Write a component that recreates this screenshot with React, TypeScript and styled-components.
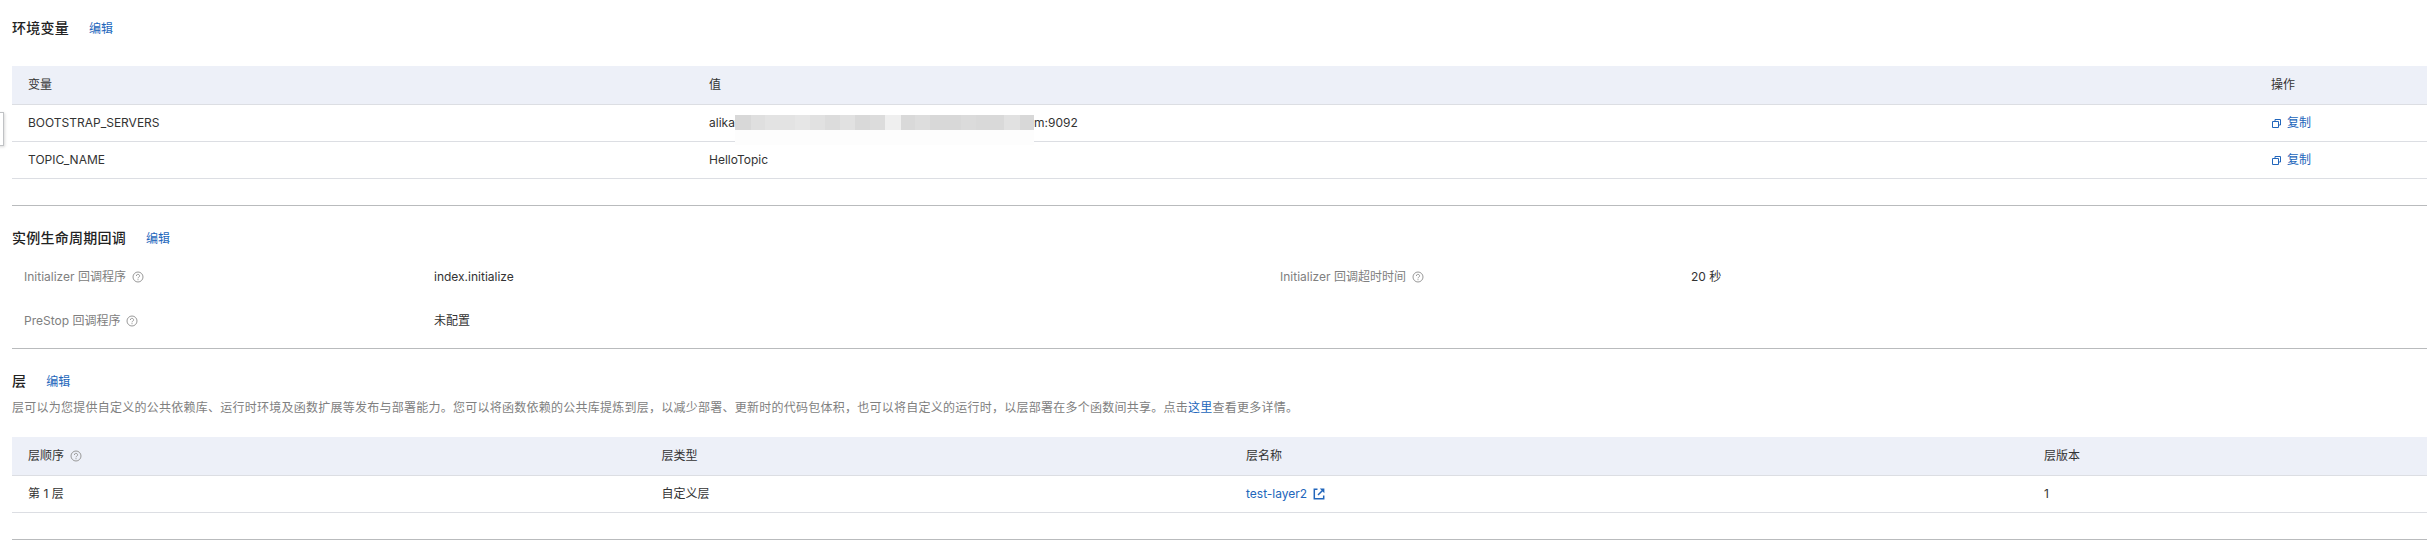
import React from "react";
import styled, { createGlobalStyle } from "styled-components";

const Global = createGlobalStyle`
  body {
    margin: 0;
    background: #fff;
    color: #333;
    font: 12px/18px Inter, "Noto Sans CJK SC", sans-serif;
    overflow: hidden;
  }
  * { box-sizing: border-box; }
`;

const Page = styled.main`
  position: relative;
  height: 550px;
  padding-left: 12px;
  overflow: hidden;
`;

const Section = styled.section<{ $height: number; $top: number }>`
  height: ${(p) => p.$height}px;
  padding-top: ${(p) => p.$top}px;
  border-bottom: 1px solid #b9bbbd;
`;

const Heading = styled.header<{ $gap: number }>`
  display: flex;
  align-items: center;
  height: 20px;
  margin-bottom: ${(p) => p.$gap}px;
`;

const Title = styled.h2`
  margin: 0 20px 0 0;
  font-size: 14px;
  line-height: 20px;
  font-weight: 500;
  letter-spacing: 0.25px;
  color: #222;
`;

const Link = styled.a`
  color: #2266bb;
  cursor: pointer;
`;

const EditLink = styled(Link)`
  padding-top: 1px;
`;

const Row = styled.div<{ $cols: string; $head?: boolean }>`
  display: grid;
  grid-template-columns: ${(p) => p.$cols};
  align-items: center;
  height: ${(p) => (p.$head ? 39 : 37)}px;
  padding-left: 16px;
  border-bottom: 1px solid #dcdee3;
  background: ${(p) => (p.$head ? "#edf0f8" : "transparent")};
`;

const Cell = styled.div`
  display: flex;
  align-items: center;
`;

const LinkCell = styled(Cell)`
  color: #2266bb;
  cursor: pointer;
`;

const Label = styled(Cell)`
  color: #808080;
`;

const InfoGrid = styled.div`
  display: grid;
  grid-template-columns: 410px 846px 411px 1fr;
  grid-auto-rows: 44px;
  padding-left: 12px;
`;

const Description = styled.p`
  margin: 0 0 20px;
  color: #808080;
  letter-spacing: 0.25px;
`;

const HelpSvg = styled.svg`
  margin-left: 6px;
  color: #999;
`;

const Help = () => (
  <HelpSvg width="12" height="12" viewBox="0 0 12 12" fill="none" stroke="currentColor">
    <circle cx="6" cy="6" r="5" />
    <path d="M4.4 5a1.6 1.5 0 1 1 2.3 1.2Q6 6.6 6 7.3M6 8.2v1" />
  </HelpSvg>
);

const CopySvg = styled.svg`
  margin-right: 5px;
`;

const Copy = () => (
  <LinkCell>
    <CopySvg width="11" height="11" viewBox="0 0 11 11" fill="none" stroke="currentColor">
      <path d="M1.5 3.5h6v6h-6zM4 3.5v-2h5.5v5.5h-2" />
    </CopySvg>
    复制
  </LinkCell>
);

const ExternalSvg = styled.svg`
  margin-left: 6px;
`;

const External = () => (
  <ExternalSvg width="12" height="12" viewBox="0 0 12 12" fill="none" stroke="currentColor" strokeWidth="1.5">
    <path d="M4.5 1.3H1.3v9.4h9.4V7.5M5 7l4.5-4.5" />
    <path d="M6.8.6h4.6v4.6z" fill="currentColor" stroke="none" />
  </ExternalSvg>
);

const Redacted = styled.span`
  position: relative;
  width: 325px;
`;

const Mosaic = styled.span`
  position: absolute;
  left: 26px;
  top: 1px;
  display: flex;
  width: 299px;
  height: 30px;
  background: #fdfdfd;
`;

const Tile = styled.i<{ $c: string; $w: number }>`
  flex: ${(p) => p.$w} 0 0;
  height: 15px;
  background: ${(p) => p.$c};
`;

const tiles: [string, number][] = [
  ["#d8d8d8", 16], ["#dfdfdf", 14], ["#e3e3e3", 30], ["#e6e6e6", 15],
  ["#e1e1e1", 15], ["#dcdcdc", 15], ["#e1e1e1", 15], ["#d9d9d9", 15],
  ["#dcdcdc", 15], ["#efefef", 16], ["#d9d9d9", 14], ["#dddddd", 15],
  ["#d8d8d8", 31], ["#dbdbdb", 15], ["#d9d9d9", 28], ["#e1e1e1", 16],
  ["#d8d8d8", 14],
];

const Handle = styled.div`
  position: absolute;
  left: -6px;
  top: 112px;
  width: 10px;
  height: 34px;
  background: #fff;
  border: 1px solid #c0c2c5;
  box-shadow: 1px 1px 3px rgba(0, 0, 0, 0.15);
`;

const envCols = "681px 1562px 1fr";
const layerCols = "633.5px 584.5px 798px 1fr";

export default function App() {
  return (
    <Page>
      <Global />
      <Handle />
      <Section $height={206} $top={18}>
        <Heading $gap={28}><Title>环境变量</Title><EditLink>编辑</EditLink></Heading>
        <Row $cols={envCols} $head><Cell>变量</Cell><Cell>值</Cell><Cell>操作</Cell></Row>
        <Row $cols={envCols}>
          <Cell>BOOTSTRAP_SERVERS</Cell>
          <Cell>
            <Redacted>
              alikaf
              <Mosaic>{tiles.map(([c, w], i) => <Tile key={i} $c={c} $w={w} />)}</Mosaic>
            </Redacted>
            m:9092
          </Cell>
          <Copy />
        </Row>
        <Row $cols={envCols}><Cell>TOPIC_NAME</Cell><Cell>HelloTopic</Cell><Copy /></Row>
      </Section>
      <Section $height={143} $top={22}>
        <Heading $gap={7}><Title>实例生命周期回调</Title><EditLink>编辑</EditLink></Heading>
        <InfoGrid>
          <Label>Initializer 回调程序<Help /></Label><Cell>index.initialize</Cell>
          <Label>Initializer 回调超时时间<Help /></Label><Cell>20 秒</Cell>
          <Label>PreStop 回调程序<Help /></Label><Cell>未配置</Cell>
        </InfoGrid>
      </Section>
      <Section $height={191} $top={22}>
        <Heading $gap={8}><Title>层</Title><EditLink>编辑</EditLink></Heading>
        <Description>层可以为您提供自定义的公共依赖库、运行时环境及函数扩展等发布与部署能力。您可以将函数依赖的公共库提炼到层，以减少部署、更新时的代码包体积，也可以将自定义的运行时，以层部署在多个函数间共享。点击<Link>这里</Link>查看更多详情。</Description>
        <Row $cols={layerCols} $head><Cell>层顺序<Help /></Cell><Cell>层类型</Cell><Cell>层名称</Cell><Cell>层版本</Cell></Row>
        <Row $cols={layerCols}><Cell>第 1 层</Cell><Cell>自定义层</Cell><LinkCell>test-layer2<External /></LinkCell><Cell>1</Cell></Row>
      </Section>
    </Page>
  );
}
